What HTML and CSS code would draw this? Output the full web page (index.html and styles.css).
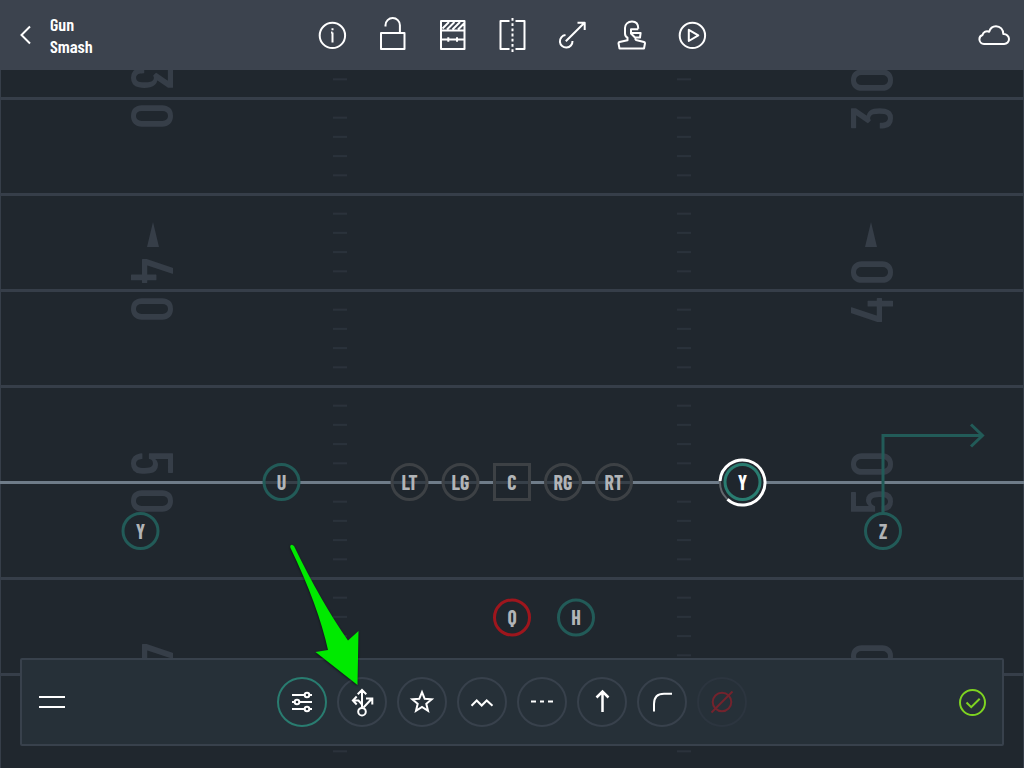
FILE: index.html
```
<!DOCTYPE html>
<html lang="en">
<head>
<meta charset="utf-8">
<meta name="viewport" content="width=device-width, initial-scale=1">
<title>Gun Smash</title>
<link rel="stylesheet" href="styles.css">
</head>
<body>
<header class="topbar">
  <div class="topbar-left">
    <button class="icon-button back" aria-label="Back">
      <svg class="chevron" viewBox="0 0 12 20"><path d="M10 1.500 1.500 10l8.500 8.500"/></svg>
    </button>
    <h1 class="title">Gun<br>Smash</h1>
  </div>
  <nav class="actions" aria-label="Play actions">
    <button class="icon-button" aria-label="Info"><svg class="icon" viewBox="0 0 36 36"><circle cx="18.400" cy="18.400" r="12.700"/><path d="M18.500 15.500V25.500M17 15.500h1.500M18.500 11.200v2"/></svg></button>
    <button class="icon-button" aria-label="Unlock"><svg class="icon" viewBox="0 0 36 36"><path d="M7 16h23.500v16H7zM11.500 9.500V8.200a7.200 7.200 0 0 1 14.400 0V16"/></svg></button>
    <button class="icon-button" aria-label="Field"><svg class="icon" viewBox="0 0 36 36"><path d="M7 4h23.500v28H7zM7 13.500h23.500M7 22.500h23.500M14.300 20.200v4.600M23 20.200v4.600M8.500 11.500 15 5M13 12.500l7.500-7.500M18.500 12.500 26 5M24 12.500l6-6"/></svg></button>
    <button class="icon-button" aria-label="Mirror"><svg class="icon" viewBox="0 0 36 36"><path d="M15.500 4H6.500v28h9M21.500 4h9v28h-9"/><path d="M18.500 1v34" stroke-dasharray="2.800 2.400"/></svg></button>
    <button class="icon-button" aria-label="Route"><svg class="icon" viewBox="0 0 36 36"><path d="M11.500 18a6.300 6.300 0 1 0 7 6M11.800 24.300 30.500 5.800M23.500 5.800h7.200V13"/></svg></button>
    <button class="icon-button" aria-label="Player"><svg class="icon" viewBox="0 0 36 36"><path d="M24.300 11.800C24.300 7 22 4.500 18 4.500c-4.200 0-7 2.800-7 6.500v5.500c0 2 .5 3.200 2.500 4.200v2.500L5.500 25c-.7.200-1 .5-1 1.200L5.500 31.500h24.500l1-5.300c0-.7-.4-1-1-1.200L22 23l-1-1.500M24.300 12.300H17v4.200l4 4h5l.6-4.500H17.500"/></svg></button>
    <button class="icon-button" aria-label="Play"><svg class="icon" viewBox="0 0 36 36"><circle cx="18.400" cy="18.400" r="12.700"/><path d="M14.800 12.800v11.200l9.500-5.600z"/></svg></button>
  </nav>
  <div class="topbar-right">
    <button class="icon-button" aria-label="Cloud sync"><svg class="icon" viewBox="0 0 36 36"><path d="M8 27a4.700 4.700 0 0 1-4.600-4.700c0-2.300 1.300-3.800 3.200-4.300.2-2.700 3.400-4.600 6.600-3.300C14.200 11 17 9.200 20 9.200c4.300 0 7.300 3.300 7.300 7.900 3.300-.2 5.700 2.200 5.700 5A4.800 4.800 0 0 1 28.200 27z"/></svg></button>
  </div>
</header>

<main class="board">
  <svg class="field" viewBox="0 70 1024 698" preserveAspectRatio="xMidYMin slice" role="img" aria-label="Play diagram">
    <defs>
      <pattern id="hashes" x="0" y="98.500" width="1024" height="96" patternUnits="userSpaceOnUse">
        <path class="hash" d="M333 19.200h14M333 38.400h14M333 57.600h14M333 76.800h14M677 19.200h14M677 38.400h14M677 57.600h14M677 76.800h14"/>
      </pattern>
    </defs>
    <rect x="0" y="70" width="1024" height="698" fill="url(#hashes)" stroke="none"/>
    <g class="yard-numbers">
      <text transform="translate(131 78) rotate(90)">3</text>
      <text transform="translate(131 116) rotate(90)">0</text>
      <text transform="translate(131 271) rotate(90)">4</text>
      <text transform="translate(131 309) rotate(90)">0</text>
      <text transform="translate(131 463) rotate(90)">5</text>
      <text transform="translate(131 501) rotate(90)">0</text>
      <text transform="translate(131 656) rotate(90)">4</text>
      <text transform="translate(893 80) rotate(-90)">0</text>
      <text transform="translate(893 118) rotate(-90)">3</text>
      <text transform="translate(893 272) rotate(-90)">0</text>
      <text transform="translate(893 310) rotate(-90)">4</text>
      <text transform="translate(893 464) rotate(-90)">0</text>
      <text transform="translate(893 502) rotate(-90)">5</text>
      <text transform="translate(893 656) rotate(-90)">0</text>
      <path d="M153 222l6 25h-12zM871 222l6 25h-12z"/>
    </g>
    <path class="yard-line" d="M0 98.500h1024M0 194.500h1024M0 290.500h1024M0 386.500h1024M0 578.500h1024M0 674.500h1024"/>
    <path class="sideline" d="M.5 70v698M1023.500 70v698"/>
    <path class="scrimmage" d="M0 482.500h1024"/>
    <path class="route" d="M883 513V435.500h99M971 424.500l11.500 11-11.500 11"/>
    <g class="player skill"><circle cx="281.500" cy="482" r="17.500"/><text x="281.500" y="490">U</text></g>
    <g class="player line"><circle cx="409.500" cy="482" r="17.500"/><text x="409.500" y="490">LT</text></g>
    <g class="player line"><circle cx="460.500" cy="482" r="17.500"/><text x="460.500" y="490">LG</text></g>
    <g class="player line"><rect x="494.500" y="464.500" width="35" height="35"/><text x="512" y="490">C</text></g>
    <g class="player line"><circle cx="563" cy="482" r="17.500"/><text x="563" y="490">RG</text></g>
    <g class="player line"><circle cx="614" cy="482" r="17.500"/><text x="614" y="490">RT</text></g>
    <g class="player skill"><circle cx="140.500" cy="531" r="17.500"/><text x="140.500" y="539">Y</text></g>
    <g class="player skill"><circle cx="883" cy="531" r="17.500"/><text x="883" y="539">Z</text></g>
    <g class="player quarterback"><circle cx="512" cy="617.500" r="17.500"/><text x="512" y="625">Q</text></g>
    <g class="player skill"><circle cx="576" cy="617.500" r="17.500"/><text x="576" y="625">H</text></g>
    <g class="player selected">
      <circle class="halo-track" cx="742.500" cy="482.500" r="22.500"/>
      <path class="halo" d="M727.500 499.300A22.500 22.500 0 1 0 720 481"/>
      <circle cx="742.500" cy="482" r="17.500"/><text x="742.500" y="490">Y</text>
    </g>
  </svg>

  <section class="toolbar" aria-label="Drawing tools">
    <div class="toolbar-start">
      <button class="icon-button" aria-label="Menu"><svg class="menu-icon" viewBox="0 0 28 28"><path d="M1 9h26M1 19h26"/></svg></button>
    </div>
    <div class="tools">
      <button class="tool active" aria-label="Settings"><svg viewBox="0 0 30 30"><path d="M5 8h12.500M22.500 8H25M5 15h2.500M12.500 15H25M5 22h12.500M22.500 22H25"/><circle cx="20" cy="8" r="2.300"/><circle cx="10" cy="15" r="2.300"/><circle cx="20" cy="22" r="2.300"/></svg></button>
      <div class="tool-wrap">
        <button class="tool" aria-label="Route tree"><svg viewBox="0 0 30 30"><circle cx="15" cy="24.700" r="3.800"/><path d="M15 20.500V3.200M10.700 7.200 15 3l4.300 4.200M15 17.500 11.500 13.500H6M9.700 9.500 5.900 13.500l3.800 4M16.500 20.500 25 11.500M19 11.500h6.300v6"/></svg></button>
        <svg class="pointer" viewBox="0 0 80 150" aria-hidden="true"><path d="M5.500 8Q4.500 5 7 4.800L9 6Q36 62 63 100.500L73.500 91 72.500 145 30.500 112 43 110Q33 65 5.500 8z"/></svg>
      </div>
      <button class="tool" aria-label="Star"><svg viewBox="0 0 30 30"><path d="M15 5.200l2.700 6.600 7 .5-5.400 4.500 1.700 7-6-3.800-6 3.800 1.700-7-5.400-4.500 7-.5z"/></svg></button>
      <button class="tool" aria-label="Zigzag line"><svg viewBox="0 0 30 30"><path d="M4.500 18.700l5.200-5.200 5 5 5-5 5.800 5.200"/></svg></button>
      <button class="tool" aria-label="Dashed line"><svg viewBox="0 0 30 30"><path d="M4 14.500h5M13 14.500h4M21 14.500h5"/></svg></button>
      <button class="tool" aria-label="Arrow end"><svg viewBox="0 0 30 30"><path d="M15.500 25V5M9.500 10.500l6-6 6 6" stroke-width="2.500"/></svg></button>
      <button class="tool" aria-label="Curve"><svg viewBox="0 0 30 30"><path d="M7 24.500V17Q7 6.700 17 6.700h8"/></svg></button>
      <button class="tool disabled" aria-label="Clear" disabled><svg viewBox="0 0 30 30"><circle cx="15" cy="15" r="9.300"/><path d="M4.500 25.500l21-21"/></svg></button>
    </div>
    <div class="toolbar-end">
      <button class="icon-button" aria-label="Done"><svg class="done-icon" viewBox="0 0 28 28"><circle cx="14.500" cy="14.500" r="12.500"/><path d="M8.500 14.500l4.700 4.700 8.500-8.500"/></svg></button>
    </div>
  </section>
</main>
</body>
</html>
```
FILE: styles.css
```
* { box-sizing: border-box; }

body {
  margin: 0;
  min-height: 100vh;
  display: flex;
  flex-direction: column;
  background: #20272e;
  color: #fff;
  font-family: "Barlow Condensed", "Roboto Condensed", "Liberation Sans Narrow", "Liberation Sans", sans-serif;
}

button { font: inherit; color: inherit; cursor: pointer; }
svg { display: block; fill: none; stroke: currentColor; }

.topbar {
  min-height: 70px;
  display: grid;
  grid-template-columns: 1fr auto 1fr;
  align-items: center;
  background: #3c434e;
}

.topbar-left { display: flex; align-items: center; gap: 18px; padding-left: 20px; }
.topbar-right { display: flex; justify-content: flex-end; padding-right: 12px; }
.title { margin: 0; font-size: 18px; line-height: 22px; font-weight: 600; }
.icon-button { padding: 0; border: 0; background: none; }
.chevron { width: 12px; height: 20px; stroke-width: 2; }
.actions { display: flex; gap: 24px; }
.icon { width: 36px; height: 36px; stroke-width: 2; stroke-linejoin: round; }

.board { position: relative; flex: 1; overflow: hidden; }
.field { position: absolute; width: 100%; height: 100%; }
.hash { stroke: #343c47; stroke-width: 1; }
.yard-line { stroke: #363e49; stroke-width: 3; }
.sideline { stroke: #363e49; stroke-width: 1; }
.scrimmage { stroke: #6f7c89; stroke-width: 3; }
.yard-numbers { fill: #363e48; stroke: none; font-size: 60px; font-weight: 500; text-anchor: middle; }
.route { stroke: #225b58; stroke-width: 3; }

.player { fill: rgba(32, 39, 46, .7); stroke-width: 3; }
.player text { fill: #b1b4b7; stroke: none; font-size: 20px; font-weight: 700; text-anchor: middle; }
.skill { stroke: #225b58; }
.line { stroke: #3d4145; }
.quarterback { stroke: #9e161d; }
.selected { stroke: #297c70; }
.selected text { fill: #fff; }
.halo-track { fill: #20272e; stroke: #62676c; stroke-width: 2; }
.halo { fill: none; stroke: #fff; stroke-width: 3; }

.toolbar {
  position: absolute;
  left: 20px;
  right: 20px;
  bottom: 22px;
  display: grid;
  grid-template-columns: 1fr auto 1fr;
  align-items: center;
  padding: 17px 16px;
  border: 2px solid #38414c;
  border-radius: 2px;
  background: #263038;
}

.toolbar-start { display: flex; }
.toolbar-end { display: flex; justify-content: flex-end; }
.menu-icon, .done-icon { width: 28px; height: 28px; stroke-width: 2; }
.done-icon { color: #7ed321; }
.tools { display: flex; gap: 10px; }
.tool-wrap { position: relative; }

.tool {
  width: 50px;
  height: 50px;
  display: grid;
  place-items: center;
  padding: 0;
  border: 2px solid #38414c;
  border-radius: 50%;
  background: none;
}

.tool svg { width: 30px; height: 30px; stroke-width: 2; }
.tool.active { border-color: #297c70; }
.tool.disabled { border-color: #2c353f; color: #73232d; cursor: default; }

.tool-wrap .pointer {
  position: absolute;
  left: -52px;
  top: -137px;
  width: 80px;
  height: 150px;
  overflow: visible;
  fill: #00ea00;
  stroke: none;
  filter: drop-shadow(0 1px 1px rgba(0, 0, 0, .6));
  pointer-events: none;
}
```
